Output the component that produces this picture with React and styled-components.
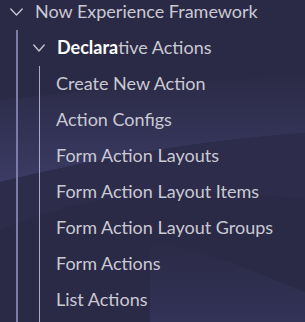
import React from "react";
import styled, { createGlobalStyle } from "styled-components";

const Global = createGlobalStyle`
  html, body { margin: 0; padding: 0; background: #2b2a46; }
  body { font-family: Lato, "Noto Sans", sans-serif; }
  *, *::before, *::after { box-sizing: border-box; }
`;

const Page = styled.div`
  position: relative;
  width: 305px;
  height: 322px;
  overflow: hidden;
  background: #2b2a46;
`;

const Backdrop = styled.svg`
  position: absolute;
  inset: 0;
  width: 305px;
  height: 322px;
`;

const Tree = styled.ul`
  position: relative;
  list-style: none;
  margin: -6px 0 0 0;
  padding: 0;
`;

const Row = styled.div`
  display: flex;
  align-items: center;
  height: 36px;
  padding: 0 0 2px ${(p) => p.$indent}px;
  gap: 12px;
  font-size: 18px;
  color: #c9c9d3;
  white-space: nowrap;
`;

const Chevron = styled.svg`
  width: ${(p) => p.$w}px;
  height: 8px;
  flex: none;
  margin-top: 1px;
`;

const Children = styled.ul`
  list-style: none;
  margin: 0 0 0 ${(p) => p.$offset}px;
  padding: 0;
  border-left: ${(p) => p.$width}px solid ${(p) => p.$color};
  min-height: 400px;
`;

const Leaf = styled.li`
  display: flex;
  align-items: center;
  height: 36px;
  padding: 0 0 2px 16px;
  font-size: 18px;
  color: #c9c9d3;
  white-space: nowrap;
`;

const Match = styled.strong`
  font-weight: 700;
  color: #ffffff;
`;

const Down = ({ w }) => (
  <Chevron $w={w} viewBox={`0 0 ${w} 8`}>
    <path
      d={`M0.8 1 L${w / 2} 7 L${w - 0.8} 1`}
      fill="none"
      stroke="#c4c4d0"
      strokeWidth="1.4"
      strokeLinecap="round"
      strokeLinejoin="round"
    />
  </Chevron>
);

const items = [
  "Create New Action",
  "Action Configs",
  "Form Action Layouts",
  "Form Action Layout Items",
  "Form Action Layout Groups",
  "Form Actions",
  "List Actions",
];

export default function App() {
  return (
    <Page>
      <Global />
      <Backdrop viewBox="0 0 305 322" aria-hidden="true">
        <defs>
          <linearGradient id="band" x1="0" y1="0" x2="0" y2="1">
            <stop offset="0" stopColor="#3a3a63" stopOpacity="0" />
            <stop offset="1" stopColor="#3b3b64" stopOpacity="1" />
          </linearGradient>
          <linearGradient id="low" x1="0" y1="0" x2="0" y2="1">
            <stop offset="0" stopColor="#333358" stopOpacity="0" />
            <stop offset="1" stopColor="#35355c" stopOpacity="1" />
          </linearGradient>
        </defs>
        <path d="M0 100 C100 90 200 80 305 75 L305 133 C200 140 90 160 0 182 Z" fill="url(#band)" />
        <path d="M0 182 C90 160 200 140 305 133 L305 200 C230 190 120 180 0 230 Z" fill="#2d2c4b" />
        <path d="M150 240 C200 248 250 270 305 292 L305 322 L150 322 Z" fill="url(#low)" opacity="0.8" />
      </Backdrop>
      <Tree>
        <li>
          <Row $indent={10}>
            <Down w={13} />
            <span>Now Experience Framework</span>
          </Row>
          <Children $offset={16} $width={2} $color="#7b7bab">
            <li>
              <Row $indent={15}>
                <Down w={12} />
                <span>
                  <Match>Declara</Match>tive Actions
                </span>
              </Row>
              <Children $offset={21} $width={1} $color="#a9a9cc">
                {items.map((t) => (
                  <Leaf key={t}>{t}</Leaf>
                ))}
              </Children>
            </li>
          </Children>
        </li>
      </Tree>
    </Page>
  );
}
